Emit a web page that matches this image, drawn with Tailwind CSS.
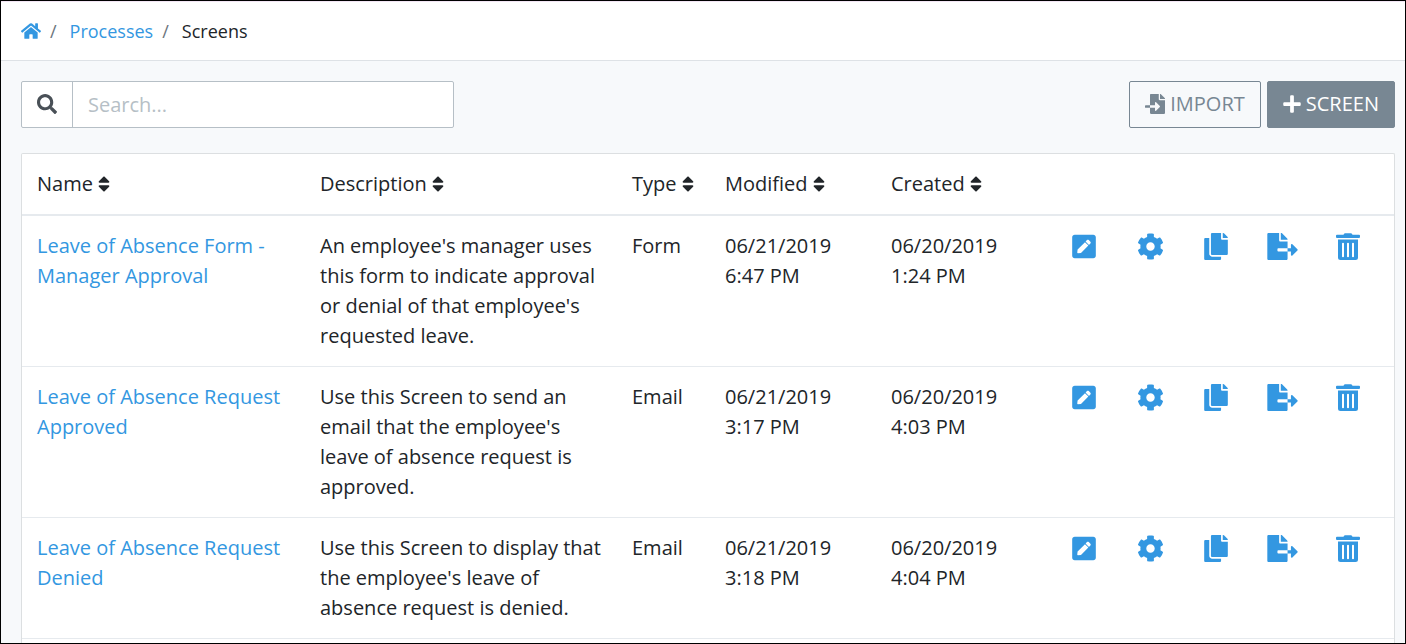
<!DOCTYPE html>
<html lang="en">
<head>
<meta charset="utf-8">
<meta name="viewport" content="width=device-width, initial-scale=1">
<title>Screens</title>
<script src="https://cdn.jsdelivr.net/npm/@tailwindcss/browser@4"></script>
</head>
<body class="flex min-h-screen flex-col border border-black bg-[#f7f9fb] font-['Open_Sans',sans-serif] text-xl/[30px] font-normal text-[#212529]">
<svg class="hidden" aria-hidden="true">
  <symbol id="home" viewBox="0 0 576 512"><path d="M280.37 148.26L96 300.11V464a16 16 0 0 0 16 16l112.06-.29a16 16 0 0 0 15.92-16V368a16 16 0 0 1 16-16h64a16 16 0 0 1 16 16v95.64a16 16 0 0 0 16 16.05L464 480a16 16 0 0 0 16-16V300L295.67 148.26a12.19 12.19 0 0 0-15.3 0zM571.6 251.47L488 182.56V44.05a12 12 0 0 0-12-12h-56a12 12 0 0 0-12 12v72.61L318.47 43a48 48 0 0 0-61 0L4.34 251.47a12 12 0 0 0-1.6 16.9l25.5 31A12 12 0 0 0 45.15 301l235.22-193.74a12.19 12.19 0 0 1 15.3 0L530.9 301a12 12 0 0 0 16.9-1.6l25.5-31a12 12 0 0 0-1.7-16.93z"/></symbol>
  <symbol id="search-icon" viewBox="0 0 512 512"><path d="M505 442.7L405.3 343c-4.5-4.5-10.6-7-17-7H372c27.6-35.3 44-79.7 44-128C416 93.1 322.9 0 208 0S0 93.1 0 208s93.1 208 208 208c48.3 0 92.7-16.4 128-44v16.3c0 6.4 2.5 12.5 7 17l99.7 99.7c9.4 9.4 24.6 9.4 33.9 0l28.3-28.3c9.4-9.4 9.4-24.6.1-34zM208 336c-70.7 0-128-57.2-128-128 0-70.7 57.2-128 128-128 70.7 0 128 57.2 128 128 0 70.7-57.2 128-128 128z"/></symbol>
  <symbol id="import" viewBox="0 0 512 512"><path d="M16 288c-8.8 0-16 7.2-16 16v32c0 8.8 7.2 16 16 16h112v-64zm489-183L407.1 7c-4.5-4.5-10.6-7-17-7H384v128h128v-6.1c0-6.3-2.5-12.4-7-16.9zm-153 31V0H152c-13.3 0-24 10.7-24 24v264h128v-65.2c0-14.3 17.3-21.4 27.4-11.3L379 308c6.6 6.7 6.6 17.4 0 24l-95.7 96.4c-10.1 10.1-27.4 3-27.4-11.3V352H128v136c0 13.3 10.7 24 24 24h336c13.3 0 24-10.7 24-24V160H376c-13.2 0-24-10.8-24-24z"/></symbol>
  <symbol id="plus" viewBox="0 0 448 512"><path d="M416 208H272V64c0-17.67-14.33-32-32-32h-32c-17.67 0-32 14.33-32 32v144H32c-17.67 0-32 14.33-32 32v32c0 17.67 14.33 32 32 32h144v144c0 17.67 14.33 32 32 32h32c17.67 0 32-14.33 32-32V304h144c17.67 0 32-14.33 32-32v-32c0-17.67-14.33-32-32-32z"/></symbol>
  <symbol id="sort" viewBox="0 0 320 512"><path d="M41 288h238c21.4 0 32.1 25.9 17 41L177 448c-9.4 9.4-24.6 9.4-33.9 0L24 329c-15.1-15.1-4.4-41 17-41zm255-105L177 64c-9.4-9.4-24.6-9.4-33.9 0L24 183c-15.1 15.1-4.4 41 17 41h238c21.4 0 32.1-25.9 17-41z"/></symbol>
  <symbol id="pen" viewBox="0 0 448 512"><path d="M400 480H48c-26.5 0-48-21.5-48-48V80c0-26.5 21.5-48 48-48h352c26.5 0 48 21.5 48 48v352c0 26.5-21.5 48-48 48zM238.1 177.9L102.4 313.6l-6.3 57.1c-.8 7.6 5.6 14.1 13.3 13.3l57.1-6.3L302.2 242c2.3-2.3 2.3-6.1 0-8.5L246.7 178c-2.5-2.4-6.3-2.4-8.6-.1zM345 165.1L314.9 135c-9.4-9.4-24.6-9.4-33.9 0l-23.1 23.1c-2.3 2.3-2.3 6.1 0 8.5l55.5 55.5c2.3 2.3 6.1 2.3 8.5 0L345 199c9.3-9.3 9.3-24.5 0-33.9z"/></symbol>
  <symbol id="cog" viewBox="0 0 512 512"><path d="M487.4 315.7l-42.6-24.6c4.3-23.2 4.3-47 0-70.2l42.6-24.6c4.9-2.8 7.1-8.6 5.5-14-11.1-35.6-30-67.8-54.7-94.6-3.8-4.1-10-5.1-14.8-2.3L380.8 110c-17.9-15.4-38.5-27.3-60.8-35.1V25.8c0-5.6-3.9-10.5-9.4-11.7-36.7-8.2-74.3-7.8-109.2 0-5.5 1.2-9.4 6.1-9.4 11.7V75c-22.2 7.9-42.8 19.8-60.8 35.1L88.7 85.5c-4.9-2.8-11-1.9-14.8 2.3-24.7 26.7-43.6 58.9-54.7 94.6-1.7 5.4.6 11.2 5.5 14L67.3 221c-4.3 23.2-4.3 47 0 70.2l-42.6 24.6c-4.9 2.8-7.1 8.6-5.5 14 11.1 35.6 30 67.8 54.7 94.6 3.8 4.1 10 5.1 14.8 2.3l42.6-24.6c17.9 15.4 38.5 27.3 60.8 35.1v49.2c0 5.6 3.9 10.5 9.4 11.7 36.7 8.2 74.3 7.8 109.2 0 5.5-1.2 9.4-6.1 9.4-11.7v-49.2c22.2-7.9 42.8-19.8 60.8-35.1l42.6 24.6c4.9 2.8 11 1.9 14.8-2.3 24.7-26.7 43.6-58.9 54.7-94.6 1.5-5.5-.7-11.3-5.6-14.1zM256 336c-44.1 0-80-35.9-80-80s35.9-80 80-80 80 35.9 80 80-35.9 80-80 80z"/></symbol>
  <symbol id="copy" viewBox="0 0 448 512"><path d="M320 448v40c0 13.255-10.745 24-24 24H24c-13.255 0-24-10.745-24-24V120c0-13.255 10.745-24 24-24h72v296c0 30.879 25.121 56 56 56h168zm0-344V0H152c-13.255 0-24 10.745-24 24v368c0 13.255 10.745 24 24 24h272c13.255 0 24-10.745 24-24V128H344c-13.2 0-24-10.8-24-24zm120.971-31.029L375.029 7.029A24 24 0 0 0 358.059 0H352v96h96v-6.059a24 24 0 0 0-7.029-16.97z"/></symbol>
  <symbol id="export" viewBox="0 0 576 512"><path d="M384 121.9c0-6.3-2.5-12.4-7-16.9L279.1 7c-4.5-4.5-10.6-7-17-7H256v128h128zM571 308l-95.7-96.4c-10.1-10.1-27.4-3-27.4 11.3V288h-64v64h64v65.2c0 14.3 17.3 21.4 27.4 11.3L571 332c6.6-6.6 6.6-17.4 0-24zm-379 28v-32c0-8.8 7.2-16 16-16h176V160H248c-13.2 0-24-10.8-24-24V0H24C10.7 0 0 10.7 0 24v464c0 13.3 10.7 24 24 24h336c13.3 0 24-10.7 24-24V352H208c-8.8 0-16-7.2-16-16z"/></symbol>
  <symbol id="trash" viewBox="0 0 24 27"><path fill-rule="evenodd" d="M1 1.700h6.500l.6-.9Q8.400.3 9 .3h6q.6 0 .9.5l.6.9H23q1 0 1 1v1.300q0 1-1 1H1q-1 0-1-1V2.700q0-1 1-1zM2 6.500h20v18q0 2.500-2.500 2.500h-15Q2 27 2 24.500zM6 10.500v13q0 .7 1 .7t1-.7v-13q0-.7-1-.7t-1 .7zM11 10.500v13q0 .7 1 .7t1-.7v-13q0-.7-1-.7t-1 .7zM16 10.500v13q0 .7 1 .7t1-.7v-13q0-.7-1-.7t-1 .7z"/></symbol>
</svg>

<nav aria-label="Breadcrumb" class="border-b border-[#dee2e6] bg-white">
  <ol class="flex items-center border-t border-[#f3e6f5] px-5 py-[15px] text-lg/7">
    <li><a href="#" aria-label="Home" class="text-[#3397e1]"><svg class="h-[18px] w-5 fill-current"><use href="#home"/></svg></a></li>
    <li aria-hidden="true" class="px-[9px] text-[#6c757d]">/</li>
    <li class="pl-1"><a href="#" class="text-[#3397e1]">Processes</a></li>
    <li aria-hidden="true" class="px-[9px] text-[#6c757d]">/</li>
    <li aria-current="page" class="pl-1">Screens</li>
  </ol>
</nav>

<main class="flex grow flex-col gap-[25px] pt-5 pr-2.5 pl-5">
  <div class="flex items-center justify-between">
    <form role="search" class="flex h-[47px] w-[433px] overflow-hidden rounded-xs border border-[#b6bfc6] bg-white">
      <label for="search" class="flex w-[51px] items-center justify-center border-r border-[#b6bfc6] pb-0.5 text-[#495057]"><svg role="img" aria-label="Search" class="size-5 fill-current"><use href="#search-icon"/></svg></label>
      <input id="search" type="text" placeholder="Search..." class="min-w-0 grow px-[15px] outline-none placeholder:text-[#b6bfc6]">
    </form>
    <div class="flex gap-1.5">
      <button type="button" class="flex h-[47px] items-center gap-[5px] rounded-xs border border-[#788793] px-[15px] pb-0.5 text-[#788793]"><svg class="size-5 fill-current"><use href="#import"/></svg>IMPORT</button>
      <button type="button" class="flex h-[47px] items-center gap-[5px] rounded-xs border border-[#788793] bg-[#788793] px-[15px] pb-0.5 text-white"><svg class="h-5 w-[18px] fill-current"><use href="#plus"/></svg>SCREEN</button>
    </div>
  </div>

  <section class="grow rounded-t-xs border border-b-0 border-[#dcdfe1] bg-white">
    <table class="w-full table-fixed text-left [&_td]:px-[15px] [&_td]:py-[15px] [&_td]:align-top [&_th]:p-[15px] [&_th]:font-normal">
      <colgroup><col class="w-[283px]"><col class="w-[312px]"><col class="w-[93px]"><col class="w-[166px]"><col class="w-[175px]"><col class="w-[343px]"></colgroup>
      <thead class="border-b-2 border-[#e6eaee]">
        <tr>
          <th scope="col"><button type="button" class="flex items-center gap-[5px]">Name<svg class="h-5 w-3 fill-current"><use href="#sort"/></svg></button></th>
          <th scope="col"><button type="button" class="flex items-center gap-[5px]">Description<svg class="h-5 w-3 fill-current"><use href="#sort"/></svg></button></th>
          <th scope="col"><button type="button" class="flex items-center gap-[5px]">Type<svg class="h-5 w-3 shrink-0 fill-current"><use href="#sort"/></svg></button></th>
          <th scope="col"><button type="button" class="flex items-center gap-[5px]">Modified<svg class="h-5 w-3 fill-current"><use href="#sort"/></svg></button></th>
          <th scope="col"><button type="button" class="flex items-center gap-[5px]">Created<svg class="h-5 w-3 fill-current"><use href="#sort"/></svg></button></th>
          <td></td>
        </tr>
      </thead>
      <tbody class="[&>tr]:border-b [&>tr]:border-[#e6eaee]">
        <tr>
          <td><a href="#" class="text-[#3397e1]">Leave of Absence Form - Manager Approval</a></td>
          <td>An employee's manager uses this form to indicate approval or denial of that employee's requested leave.</td>
          <td>Form</td>
          <td>06/21/2019<br>6:47 PM</td>
          <td>06/20/2019<br>1:24 PM</td>
          <td class="!px-0"><div class="flex justify-end pr-[13px] text-[#3397e1] [&>button]:flex [&>button]:h-[31px] [&>button]:w-[66px] [&>button]:items-center [&>button]:justify-center">
            <button type="button" aria-label="Edit"><svg class="h-[27px] w-6 fill-current"><use href="#pen"/></svg></button>
            <button type="button" aria-label="Configure"><svg class="size-[27px] fill-current"><use href="#cog"/></svg></button>
            <button type="button" aria-label="Copy"><svg class="h-[27px] w-6 fill-current"><use href="#copy"/></svg></button>
            <button type="button" aria-label="Export"><svg class="h-[27px] w-[31px] fill-current"><use href="#export"/></svg></button>
            <button type="button" aria-label="Delete"><svg class="h-[27px] w-6 fill-current"><use href="#trash"/></svg></button>
          </div></td>
        </tr>
        <tr>
          <td><a href="#" class="text-[#3397e1]">Leave of Absence Request Approved</a></td>
          <td>Use this Screen to send an email that the employee's leave of absence request is approved.</td>
          <td>Email</td>
          <td>06/21/2019<br>3:17 PM</td>
          <td>06/20/2019<br>4:03 PM</td>
          <td class="!px-0"><div class="flex justify-end pr-[13px] text-[#3397e1] [&>button]:flex [&>button]:h-[31px] [&>button]:w-[66px] [&>button]:items-center [&>button]:justify-center">
            <button type="button" aria-label="Edit"><svg class="h-[27px] w-6 fill-current"><use href="#pen"/></svg></button>
            <button type="button" aria-label="Configure"><svg class="size-[27px] fill-current"><use href="#cog"/></svg></button>
            <button type="button" aria-label="Copy"><svg class="h-[27px] w-6 fill-current"><use href="#copy"/></svg></button>
            <button type="button" aria-label="Export"><svg class="h-[27px] w-[31px] fill-current"><use href="#export"/></svg></button>
            <button type="button" aria-label="Delete"><svg class="h-[27px] w-6 fill-current"><use href="#trash"/></svg></button>
          </div></td>
        </tr>
        <tr>
          <td><a href="#" class="text-[#3397e1]">Leave of Absence Request Denied</a></td>
          <td>Use this Screen to display that the employee's leave of absence request is denied.</td>
          <td>Email</td>
          <td>06/21/2019<br>3:18 PM</td>
          <td>06/20/2019<br>4:04 PM</td>
          <td class="!px-0"><div class="flex justify-end pr-[13px] text-[#3397e1] [&>button]:flex [&>button]:h-[31px] [&>button]:w-[66px] [&>button]:items-center [&>button]:justify-center">
            <button type="button" aria-label="Edit"><svg class="h-[27px] w-6 fill-current"><use href="#pen"/></svg></button>
            <button type="button" aria-label="Configure"><svg class="size-[27px] fill-current"><use href="#cog"/></svg></button>
            <button type="button" aria-label="Copy"><svg class="h-[27px] w-6 fill-current"><use href="#copy"/></svg></button>
            <button type="button" aria-label="Export"><svg class="h-[27px] w-[31px] fill-current"><use href="#export"/></svg></button>
            <button type="button" aria-label="Delete"><svg class="h-[27px] w-6 fill-current"><use href="#trash"/></svg></button>
          </div></td>
        </tr>
      </tbody>
    </table>
  </section>
</main>
</body>
</html>
